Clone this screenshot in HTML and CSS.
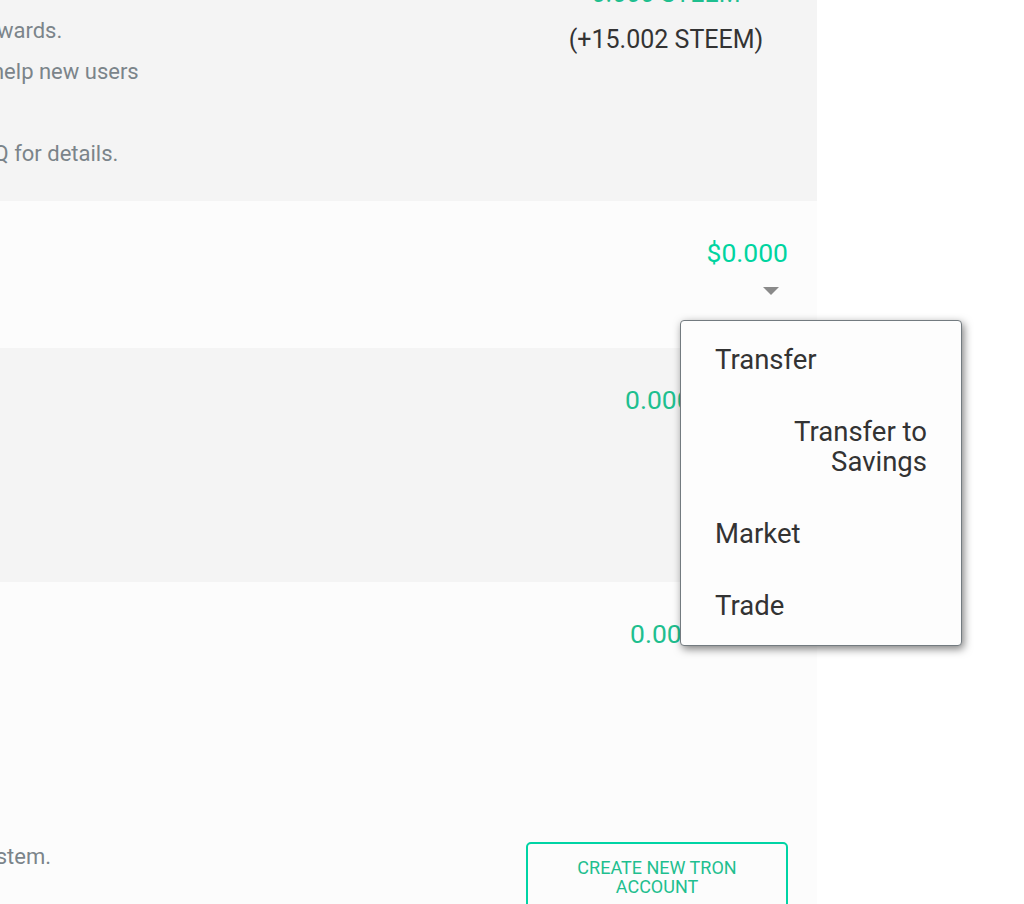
FILE: index.html
```
<!DOCTYPE html>
<html>
<head>
<meta charset="utf-8">
<link rel="stylesheet" href="styles.css">
</head>
<body>
<div class="page">
  <div class="wallet">
    <div class="row row-steem">
      <div class="desc">
        <div class="line cut-w">rewards.</div>
        <div class="line cut-h">help new users</div>
        <div class="line">&nbsp;</div>
        <div class="line cut-q">FAQ for details.</div>
      </div>
      <div class="value value-center">
        <div class="amount amount-top">0.000 STEEM</div>
        <div class="pending">(+15.002 STEEM)</div>
      </div>
    </div>
    <div class="row row-sp">
      <div class="desc"></div>
      <div class="value value-right">
        <div class="amount amount-bright">$0.000</div>
        <div class="caret-wrap"><span class="caret"></span></div>
      </div>
    </div>
    <div class="row row-sbd">
      <div class="desc"></div>
      <div class="value value-right value-sbd">
        <div class="amount">0.000 STEEM</div>
      </div>
    </div>
    <div class="row row-tron">
      <div class="tron-top">
        <div class="desc"></div>
        <div class="value value-right">
          <div class="amount">0.000 STEEM</div>
        </div>
      </div>
      <div class="tron-bottom">
        <div class="desc">
          <div class="line cut-s">system.</div>
        </div>
        <div class="btn-col">
          <button class="btn-outline">Create new TRON account</button>
        </div>
      </div>
    </div>
  </div>
  <div class="menu">
    <div class="menu-item">Transfer</div>
    <div class="menu-item menu-item-right">Transfer to Savings</div>
    <div class="menu-item">Market</div>
    <div class="menu-item">Trade</div>
  </div>
</div>
</body>
</html>
```
FILE: styles.css
```
html, body {
  margin: 0;
  padding: 0;
  background: #ffffff;
  font-family: Roboto, "Liberation Sans", Arial, sans-serif;
  overflow: hidden;
}

.page {
  position: relative;
  width: 1024px;
  height: 904px;
  overflow: hidden;
}

.wallet {
  width: 817px;
  display: flex;
  flex-direction: column;
}

.row {
  display: flex;
  overflow: hidden;
  flex: none;
}

.row-steem {
  height: 201px;
  background: #f4f4f4;
}

.row-sp {
  height: 147px;
  background: #fcfcfc;
}

.row-sbd {
  height: 234px;
  background: #f4f4f4;
}

.row-tron {
  height: 322px;
  background: #fcfcfc;
  flex-direction: column;
}

.desc {
  flex: 1;
  padding-top: 10px;
  color: #7b848a;
  font-size: 22px;
  line-height: 41px;
  overflow: hidden;
}

.line {
  white-space: nowrap;
}

.cut-w { margin-left: -22px; }
.cut-h { margin-left: -8px; }
.cut-q { margin-left: -31px; }
.cut-s { margin-left: -26px; }

.value {
  flex: none;
}

.value-center {
  width: 270px;
  margin-right: 16px;
  margin-top: -29px;
  text-align: center;
  line-height: 46px;
}

.value-right {
  padding-right: 29px;
  padding-top: 34px;
  text-align: right;
}

.value-sbd {
  padding-right: 34px;
}

.amount {
  font-size: 26.5px;
  line-height: 36px;
  color: #1fbf8f;
  white-space: nowrap;
}

.amount-top {
  font-size: 25px;
  line-height: 46px;
}

.amount-bright {
  color: #00d4a0;
}

.pending {
  font-size: 25px;
  color: #333333;
  white-space: nowrap;
}

.caret-wrap {
  height: 20px;
  padding-top: 16px;
  padding-right: 9px;
  display: flex;
  justify-content: flex-end;
}

.caret {
  width: 0;
  height: 0;
  border-left: 8px solid transparent;
  border-right: 8px solid transparent;
  border-top: 8px solid #8a8a8a;
}

.tron-top {
  display: flex;
  flex: none;
  height: 260px;
}

.tron-bottom {
  display: flex;
  flex: none;
}

.tron-bottom .desc {
  padding-top: 0;
  line-height: 30px;
}

.btn-col {
  flex: none;
  padding-right: 29px;
}

.btn-outline {
  width: 262px;
  height: 80px;
  box-sizing: border-box;
  border: 2px solid #00d4a5;
  border-radius: 5px;
  background: transparent;
  color: #1fbf8f;
  font-family: Roboto, "Liberation Sans", Arial, sans-serif;
  font-size: 18px;
  line-height: 19px;
  text-transform: uppercase;
  text-align: center;
  padding: 14px 30px 0;
  display: flex;
  align-items: flex-start;
  justify-content: center;
}

.menu {
  position: absolute;
  left: 680px;
  top: 320px;
  width: 282px;
  height: 326px;
  box-sizing: border-box;
  background: #fdfdfd;
  border: 1px solid #737b80;
  border-radius: 4px;
  box-shadow: 2px 3px 8px rgba(0, 0, 0, 0.5);
  padding: 3px 34px 0;
}

.menu-item {
  font-size: 27.5px;
  line-height: 30px;
  color: #333333;
  padding: 21px 0;
}

.menu-item-right {
  text-align: right;
}
```
